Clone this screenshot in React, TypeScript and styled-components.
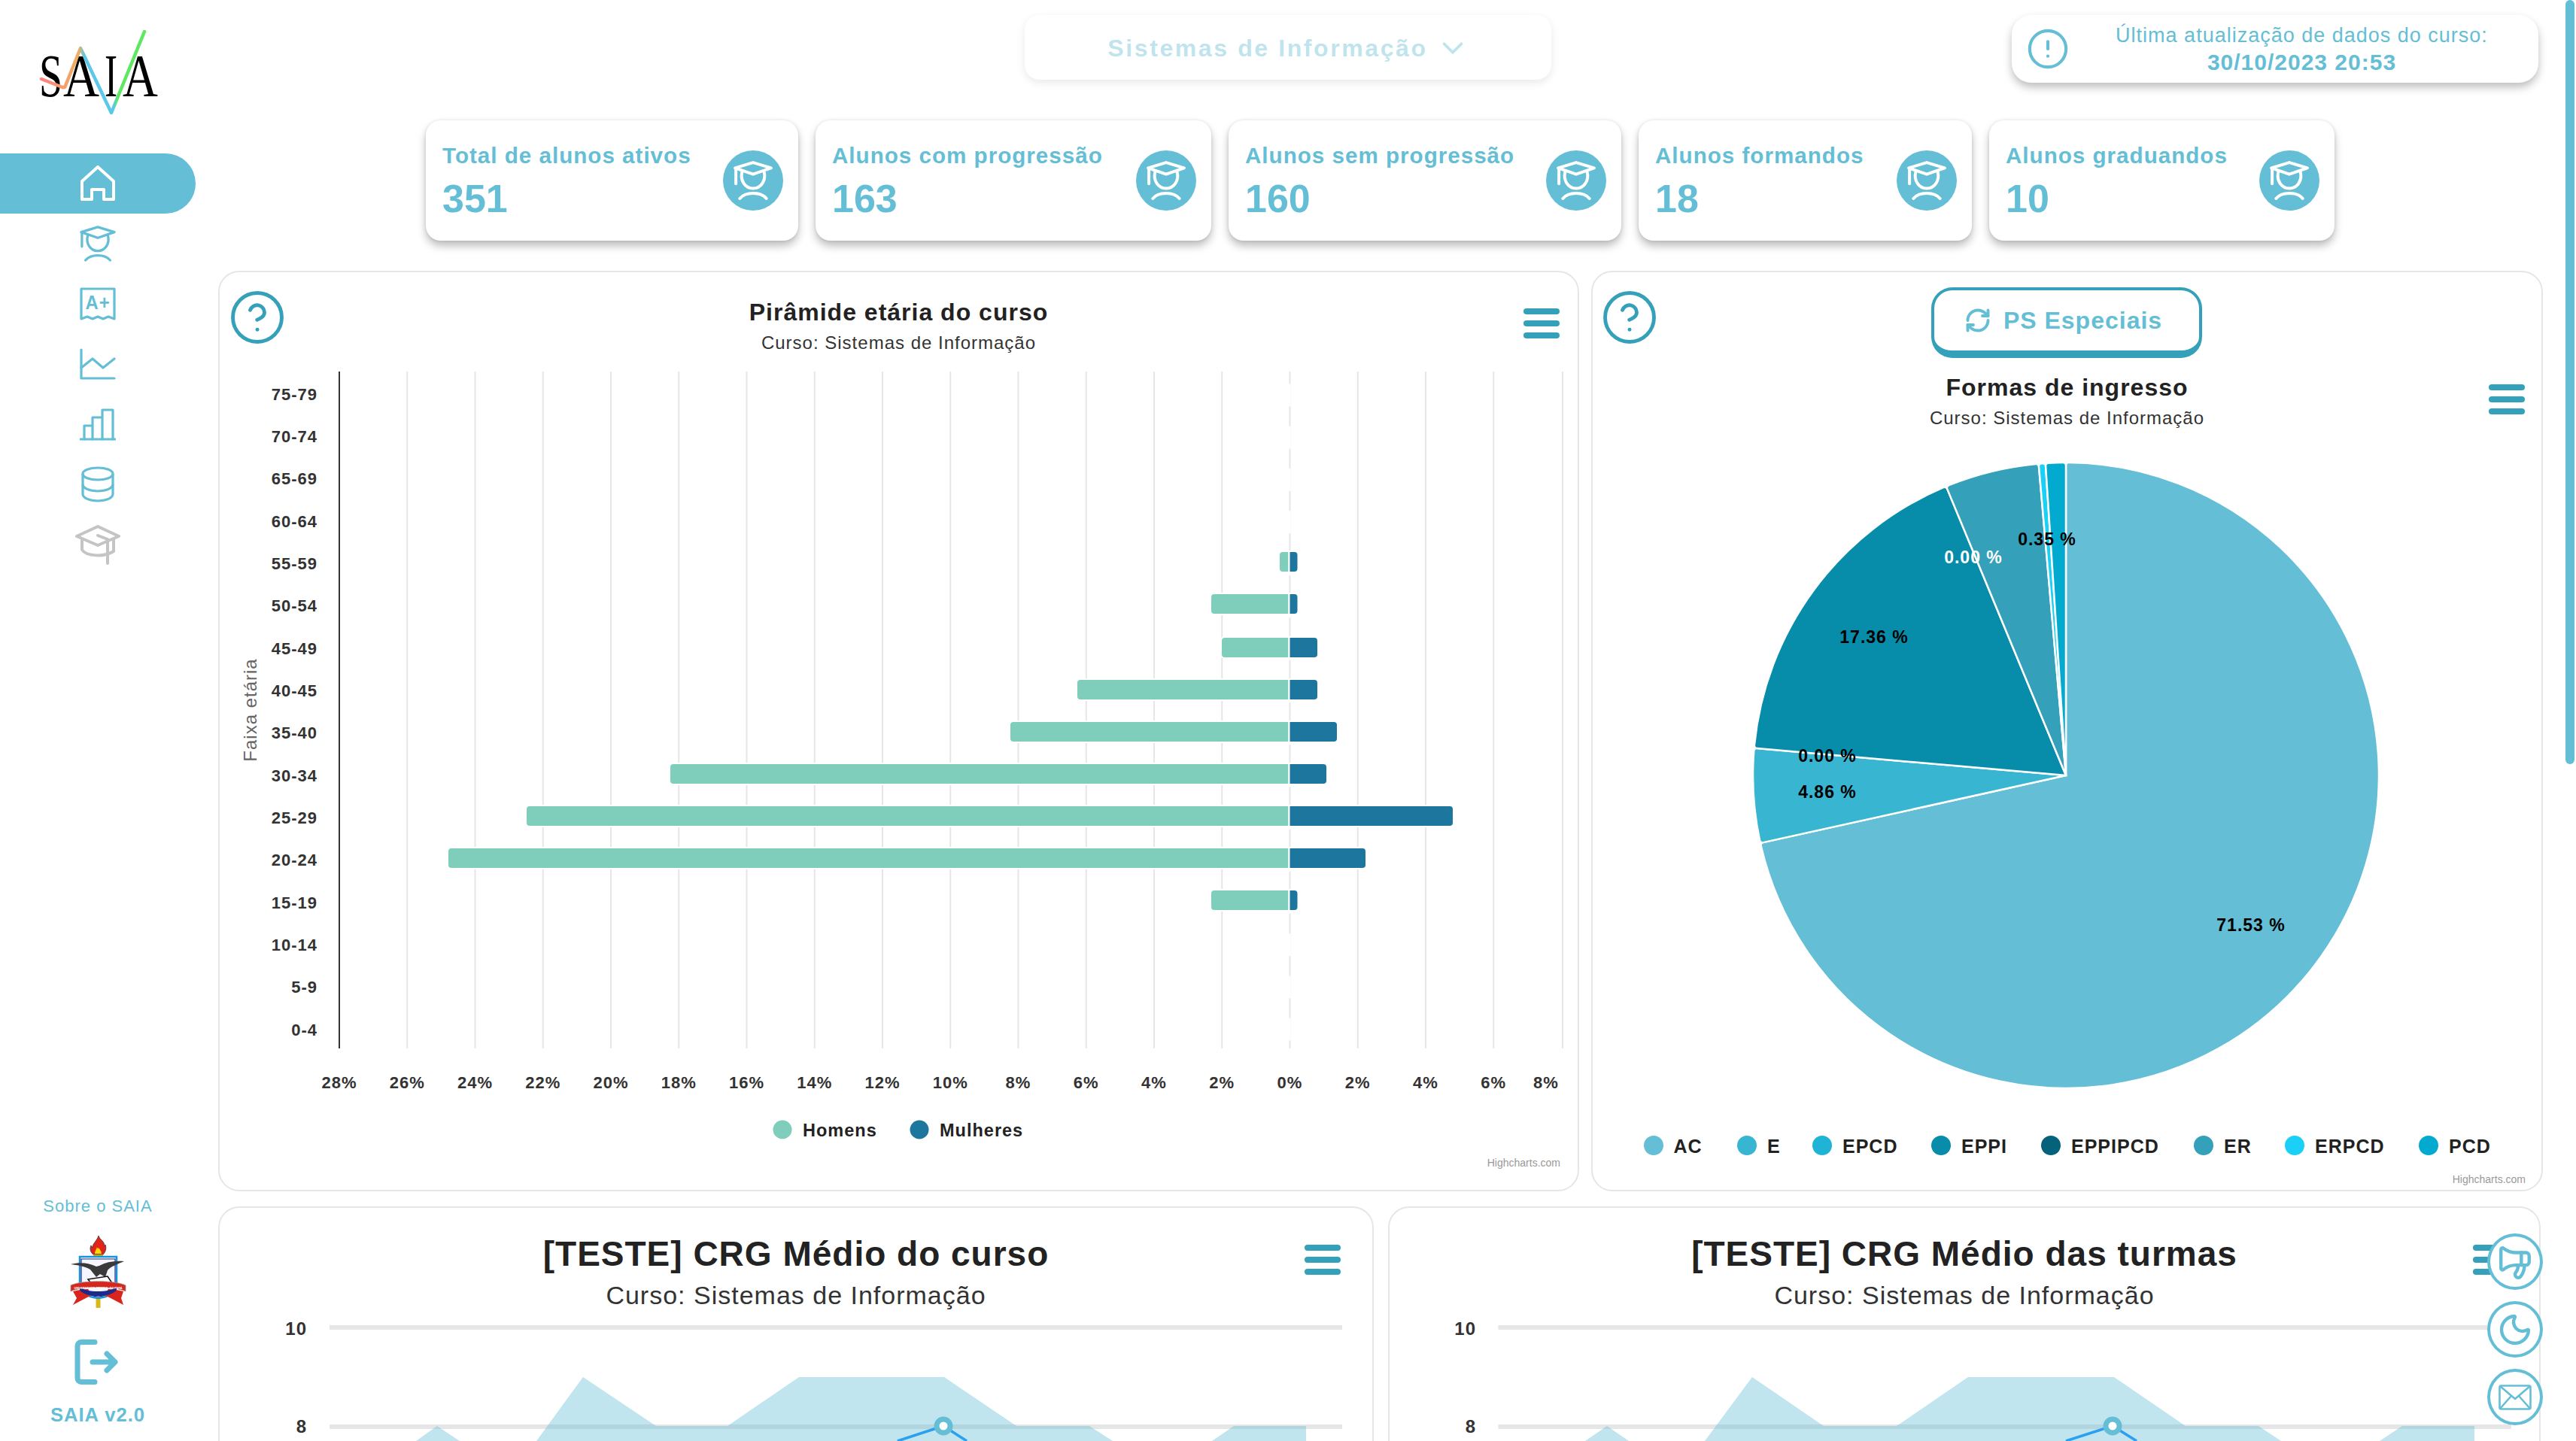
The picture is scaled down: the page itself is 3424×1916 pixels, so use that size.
import React from 'react'
import styled, { createGlobalStyle } from 'styled-components'
import { CircleAlert, CircleHelp, ChevronDown, RefreshCw, Megaphone, Moon } from 'lucide-react'

const ACCENT = '#64bed5'
const DEEP = '#34a0b9'
const GRID = '#e6e6e6'
const INK = '#333333'

const GlobalStyle = createGlobalStyle`
	html, body {
		margin: 0;
		height: 100%;
		overflow: hidden;
		background: #fff;
		font-family: 'Liberation Sans', Arial, sans-serif;
		letter-spacing: 1px;
	}
	* { box-sizing: border-box; }
`

const Shell = styled.div`
	display: flex;
	height: 100vh;
	background: #fff;
`

/* ---------- sidebar ---------- */

const Sidebar = styled.aside`
	flex: 0 0 290px;
	display: flex;
	flex-direction: column;
	height: 100vh;
	padding-bottom: 20px;
`

const LogoBox = styled.div`
	height: 204px;
	padding: 40px 0 0 52px;
	svg { display: block; }
`

const Nav = styled.nav`
	display: flex;
	flex-direction: column;
`

const NavItem = styled.a<{ $active?: boolean; $muted?: boolean }>`
	display: flex;
	align-items: center;
	justify-content: center;
	width: 260px;
	height: 80px;
	border-radius: 0 40px 40px 0;
	background: ${p => (p.$active ? ACCENT : 'transparent')};
	color: ${p => (p.$active ? '#fff' : p.$muted ? '#c4c4c4' : ACCENT)};
`

const SideBottom = styled.div`
	margin-top: auto;
	width: 260px;
	display: flex;
	flex-direction: column;
	align-items: center;
`

const AboutLink = styled.a`
	font-size: 22px;
	color: ${ACCENT};
`

const Crest = styled.svg`
	display: block;
	margin-top: 26px;
`

const LogoutIcon = styled.svg`
	display: block;
	margin: 42px 4px 0 0;
	color: ${ACCENT};
`

const Version = styled.div`
	margin-top: 26px;
	font-size: 25.6px;
	font-weight: 700;
	color: ${ACCENT};
`

/* ---------- content ---------- */

const Content = styled.main`
	flex: 1;
	height: 100vh;
	overflow: hidden;
`

const ScrollThumb = styled.div`
	position: fixed;
	top: 0;
	right: 2px;
	width: 12px;
	height: 1016px;
	border-radius: 6px;
	background: ${ACCENT};
`

const TopBar = styled.header`
	display: grid;
	grid-template-columns: 700px 700px;
	justify-content: space-between;
	padding: 20px 50px 0 1072px;
	align-items: start;
`

const CourseSelect = styled.div`
	height: 86px;
	display: flex;
	align-items: center;
	justify-content: center;
	gap: 10px;
	padding: 2px 0 0 2px;
	border-radius: 20px;
	box-shadow: 0 4px 12px rgba(0, 0, 0, 0.09);
	color: rgba(100, 190, 213, 0.42);
	font-size: 32px;
	font-weight: 700;
	letter-spacing: 2.6px;
`

const UpdateBox = styled.div`
	height: 90px;
	display: flex;
	align-items: center;
	padding-left: 19px;
	border-radius: 26px;
	color: ${ACCENT};
	box-shadow: 0 6px 12px rgba(0, 0, 0, 0.26);
`

const UpdateText = styled.div`
	flex: 1;
	text-align: center;
	padding-right: 6px;
	font-size: 27px;
	line-height: 36px;
	strong { display: block; font-size: 30px; }
`

const StatRow = styled.section`
	display: grid;
	grid-template-columns: 495px 526px 522px 443px 459px;
	gap: 23px;
	margin: 50px 0 0 276px;
`

const StatCard = styled.article`
	height: 160px;
	display: flex;
	align-items: center;
	justify-content: space-between;
	padding: 0 20px 0 22px;
	border-radius: 20px;
	color: ${ACCENT};
	box-shadow: 0 7px 12px rgba(0, 0, 0, 0.26), 0 0 4px rgba(0, 0, 0, 0.1);
`

const StatText = styled.div`
	padding-bottom: 2px;
`

const StatLabel = styled.div`
	font-size: 29.6px;
	font-weight: 700;
	line-height: 36px;
	white-space: nowrap;
`

const StatValue = styled.div`
	margin-top: 14px;
	font-size: 52px;
	font-weight: 700;
	line-height: 50px;
	letter-spacing: 0;
`

const StatIcon = styled.div`
	flex: 0 0 80px;
	height: 80px;
	display: flex;
	align-items: center;
	justify-content: center;
	border-radius: 50%;
	background: ${ACCENT};
	color: #fff;
`

const ChartGrid = styled.section<{ $cols: string; $gap: number; $height: number; $top: number }>`
	display: grid;
	grid-template-columns: ${p => p.$cols};
	column-gap: ${p => p.$gap}px;
	margin-top: ${p => p.$top}px;
	> * { height: ${p => p.$height}px; }
`

const Panel = styled.article`
	position: relative;
	display: flex;
	flex-direction: column;
	align-items: center;
	border: 2px solid ${GRID};
	border-radius: 28px;
	background: #fff;
	svg.chart { display: block; flex: none; }
`

const ChartTitle = styled.h2<{ $large?: boolean }>`
	margin: 34px 0 0;
	font-size: ${p => (p.$large ? '46px' : '32px')};
	line-height: ${p => (p.$large ? '54px' : '38px')};
	font-weight: 700;
	color: #222;
`

const ChartSubtitle = styled.div<{ $large?: boolean }>`
	margin-top: ${p => (p.$large ? '8px' : '7px')};
	font-size: ${p => (p.$large ? '34px' : '24px')};
	line-height: ${p => (p.$large ? '40px' : '30px')};
	color: #333;
`

const HelpButton = styled.div<{ $left: number }>`
	position: absolute;
	top: 21px;
	left: ${p => p.$left}px;
	color: ${DEEP};
	line-height: 0;
`

const MenuButton = styled.div<{ $top: number; $right: number }>`
	position: absolute;
	top: ${p => p.$top}px;
	right: ${p => p.$right}px;
	width: 48px;
	display: flex;
	flex-direction: column;
	gap: 8px;
	span {
		height: 8px;
		border-radius: 4px;
		background: ${DEEP};
	}
`

const SpecialButton = styled.button`
	margin: 20px 2px 0 0;
	width: 360px;
	height: 94px;
	display: flex;
	align-items: center;
	justify-content: center;
	gap: 16px;
	padding: 0 8px 0 0;
	background: #fff;
	border: 4px solid ${DEEP};
	border-bottom-width: 10px;
	border-radius: 28px;
	color: ${ACCENT};
	font-family: inherit;
	font-size: 32px;
	font-weight: 700;
	letter-spacing: 1px;
`

const SpecialTitle = styled(ChartTitle)`
	margin-top: 20px;
`

const FloatStack = styled.div`
	position: fixed;
	right: 44px;
	bottom: 21px;
	display: flex;
	flex-direction: column;
	gap: 15px;
`

const FloatButton = styled.button`
	width: 74px;
	height: 75px;
	padding: 0;
	display: flex;
	align-items: center;
	justify-content: center;
	border: 4px solid ${ACCENT};
	border-radius: 50%;
	background: #fff;
	color: ${ACCENT};
`

/* ---------- svg chart text ---------- */

const AxisText = styled.text`
	font-size: 22px;
	font-weight: 700;
	fill: ${INK};
`

const AxisTitle = styled.text`
	font-size: 24px;
	fill: #666;
`

const LegendText = styled.text<{ $size: number }>`
	font-size: ${p => p.$size}px;
	font-weight: 700;
	fill: #222;
`

const Credits = styled.text`
	font-size: 14px;
	fill: #999;
	letter-spacing: 0;
`

const PieLabel = styled.text`
	font-size: 23px;
	font-weight: 700;
	letter-spacing: 1px;
`

/* ---------- icons ---------- */

const Student = ({ size = 48, stroke = 3.4 }: { size?: number; stroke?: number }) => (
	<svg width={size} height={size} viewBox='0 0 48 50' fill='none' stroke='currentColor' strokeWidth={stroke} strokeLinecap='round' strokeLinejoin='round'>
		<path d='M24 2 47 9 24 17 1 9Z' />
		<path d='M2 10v19' />
		<path d='M10 14c-3 11 4 21 14 21s17-10 14-21' />
		<path d='M7 48c7-9 27-9 34 0' />
	</svg>
)

const navIcons = [
	<svg key='home' width='48' height='49' viewBox='0 0 48 49' fill='none' stroke='currentColor' strokeWidth='4' strokeLinejoin='round'>
		<path d='M3 21 24 2l21 19v24H32V32H16v13H3Z' />
	</svg>,
	<Student key='student' />,
	<svg key='grade' width='48' height='44' viewBox='0 0 48 44' fill='none' stroke='currentColor' strokeWidth='3.2' strokeLinejoin='round'>
		<path d='M2 2h44v40l-8-3-7 3-7-3-7 3-7-3-8 3Z' />
		<text x='24' y='29' textAnchor='middle' fontSize='25' fontWeight='700' fill='currentColor' stroke='none' textLength='33' lengthAdjust='spacingAndGlyphs'>A+</text>
	</svg>,
	<svg key='line' width='48' height='42' viewBox='0 0 48 42' fill='none' stroke='currentColor' strokeWidth='3.2' strokeLinecap='round' strokeLinejoin='round'>
		<path d='M2 2v38h44' />
		<path d='M2 26 17 14l14 12 15-12' />
	</svg>,
	<svg key='bars' width='48' height='43' viewBox='0 0 48 43' fill='none' stroke='currentColor' strokeWidth='3.2' strokeLinecap='round' strokeLinejoin='round'>
		<path d='M1 41h46' />
		<path d='M6 41V23h11v18M17 41V12h13v29M30 41V2h14v39' />
	</svg>,
	<svg key='db' width='44' height='49' viewBox='0 0 44 49' fill='none' stroke='currentColor' strokeWidth='3.2'>
		<ellipse cx='22' cy='10' rx='20' ry='8' />
		<path d='M2 10v27c0 5 9 9 20 9s20-4 20-9V10' />
		<path d='M2 24c0 5 9 9 20 9s20-4 20-9' />
	</svg>,
	<svg key='cap' width='60' height='53' viewBox='0 0 60 53' fill='none' stroke='currentColor' strokeWidth='4' strokeLinecap='round' strokeLinejoin='round'>
		<path d='M30 2 58 15 30 27 2 15Z' />
		<path d='M9 20v13c6 9 30 10 42 2V20' />
		<path d='M30 14l13 5v32' />
	</svg>,
]

/* ---------- pyramid data ---------- */

const AGES = ['75-79', '70-74', '65-69', '60-64', '55-59', '50-54', '45-49', '40-45', '35-40', '30-34', '25-29', '20-24', '15-19', '10-14', '5-9', '0-4']
const ZERO_X = 1713.5
const TICKS = [28, 26, 24, 22, 20, 18, 16, 14, 12, 10, 8, 6, 4, 2, 0, 2, 4, 6, 8]
const tickX = (i: number) => (i === 18 ? 2077 : 451 + i * 90.25)
const labelX = (i: number) => (i === 18 ? 2055 : tickX(i))

// y of the bar, left end, right end
const BARS: [number, number, number][] = [
	[734, 1701, 1724.5],
	[790, 1610, 1724.5],
	[848, 1624, 1751],
	[904, 1432, 1751],
	[960, 1343, 1777],
	[1016, 891, 1763],
	[1072, 700, 1931],
	[1128, 596, 1815],
	[1184, 1610, 1724.5],
]

const leftBar = (x: number, y: number) =>
	`M${ZERO_X - 1} ${y}H${x + 4}Q${x} ${y} ${x} ${y + 4}V${y + 22}Q${x} ${y + 26} ${x + 4} ${y + 26}H${ZERO_X - 1}Z`
const rightBar = (x: number, y: number) =>
	`M${ZERO_X + 1} ${y}H${x - 4}Q${x} ${y} ${x} ${y + 4}V${y + 22}Q${x} ${y + 26} ${x - 4} ${y + 26}H${ZERO_X + 1}Z`

const Pyramid = () => (
	<svg className='chart' width='1805' height='1100' viewBox='292 480 1805 1100' style={{ marginTop: 9 }}>
		{TICKS.map((_, i) =>
			i === 0 ? null : <rect key={i} x={tickX(i) - 1} y='494' width='2' height='900' fill={GRID} />
		)}
		<rect x='450' y='494' width='2' height='900' fill={INK} />
		{AGES.map((_, i) => (
			<rect key={i} x={ZERO_X - 2} y={510.5 + i * 56.2} width='4' height='30' fill='#fff' />
		))}
		{BARS.map(([y, l, r]) => (
			<g key={y} stroke='#fff' strokeWidth='4' style={{ paintOrder: 'stroke' }}>
				<path d={leftBar(l, y)} fill='#7fcdbb' />
				<path d={rightBar(r, y)} fill='#1c769e' />
			</g>
		))}
		{AGES.map((age, i) => (
			<AxisText key={age} x='422' y={524 + i * 56.35} textAnchor='end' dominantBaseline='central'>{age}</AxisText>
		))}
		{TICKS.map((t, i) => (
			<AxisText key={i} x={labelX(i)} y='1439' textAnchor='middle' dominantBaseline='central'>{t}%</AxisText>
		))}
		<AxisTitle transform='translate(332 944) rotate(-90)' textAnchor='middle' dominantBaseline='central'>Faixa etária</AxisTitle>
		<circle cx='1040' cy='1502' r='12.5' fill='#7fcdbb' />
		<LegendText $size={23.5} x='1067' y='1503' dominantBaseline='central'>Homens</LegendText>
		<circle cx='1222' cy='1502' r='12.5' fill='#1c769e' />
		<LegendText $size={23.5} x='1249' y='1503' dominantBaseline='central'>Mulheres</LegendText>
		<Credits x='2074' y='1546' textAnchor='end' dominantBaseline='central'>Highcharts.com</Credits>
	</svg>
)

/* ---------- pie data ---------- */

const CX = 2746
const CY = 1029
const R = 416

const SLICES = [
	{ name: 'AC', value: 71.53, color: '#64bed5', legend: 2198, text: 2224.5 },
	{ name: 'E', value: 4.86, color: '#38b6d1', legend: 2322, text: 2349 },
	{ name: 'EPCD', value: 0, color: '#1fb3d6', legend: 2422, text: 2449 },
	{ name: 'EPPI', value: 17.36, color: '#078daa', legend: 2580, text: 2607 },
	{ name: 'EPPIPCD', value: 0, color: '#05627b', legend: 2726, text: 2753 },
	{ name: 'ER', value: 4.86, color: '#34a0b9', legend: 2929, text: 2956 },
	{ name: 'ERPCD', value: 0.35, color: '#1bd0f7', legend: 3050, text: 3077 },
	{ name: 'PCD', value: 1.04, color: '#03aad0', legend: 3228, text: 3255 },
]

const PIE_LABELS = [
	{ text: '71.53 %', x: 2992, y: 1228, fill: '#000' },
	{ text: '4.86 %', x: 2429, y: 1051, fill: '#000' },
	{ text: '0.00 %', x: 2429, y: 1003, fill: '#000' },
	{ text: '17.36 %', x: 2491, y: 845, fill: '#000' },
	{ text: '0.00 %', x: 2623, y: 739, fill: '#fff' },
	{ text: '0.35 %', x: 2721, y: 715, fill: '#000' },
]

const polar = (deg: number, r: number) => {
	const a = (deg * Math.PI) / 180
	return `${(CX + r * Math.sin(a)).toFixed(2)} ${(CY - r * Math.cos(a)).toFixed(2)}`
}

const slicePath = (from: number, to: number) => {
	const c = Math.min(4, ((to - from) * Math.PI * R) / 360)
	const nudge = (c / R) * (180 / Math.PI)
	const large = to - from > 180 ? 1 : 0
	return [
		`M${CX} ${CY}`,
		`L${polar(from, R - c)}`,
		`Q${polar(from, R)} ${polar(from + nudge, R)}`,
		`A${R} ${R} 0 ${large} 1 ${polar(to - nudge, R)}`,
		`Q${polar(to, R)} ${polar(to, R - c)}`,
		'Z',
	].join(' ')
}

const Pie = () => {
	let angle = 0
	return (
		<svg className='chart' width='1261' height='1000' viewBox='2117 580 1261 1000' style={{ marginTop: 11 }}>
			{SLICES.map(s => {
				const from = angle
				angle += (s.value / 100) * 360
				if (!s.value) return null
				return <path key={s.name} d={slicePath(from, angle)} fill={s.color} stroke='#fff' strokeWidth='2.5' />
			})}
			{PIE_LABELS.map(l => (
				<PieLabel key={`${l.text}${l.y}`} x={l.x} y={l.y} textAnchor='middle' dominantBaseline='central' fill={l.fill}>{l.text}</PieLabel>
			))}
			{SLICES.map(s => (
				<g key={s.name}>
					<circle cx={s.legend} cy='1521' r='13' fill={s.color} />
					<LegendText $size={25} x={s.text} y='1522' dominantBaseline='central'>{s.name}</LegendText>
				</g>
			))}
			<Credits x='3357' y='1566' textAnchor='end' dominantBaseline='central'>Highcharts.com</Credits>
		</svg>
	)
}

/* ---------- CRG area charts ---------- */

type CrgProps = {
	left: number
	width: number
	gridFrom: number
	gridTo: number
	labelRight: number
	areas: string[]
	dot: number
	lineFrom: number
	lineTo: number
}

const CrgChart = ({ left, width, gridFrom, gridTo, labelRight, areas, dot, lineFrom, lineTo }: CrgProps) => (
	<svg className='chart' width={width} height='166' viewBox={`${left} 1750 ${width} 166`} style={{ marginTop: 8 }}>
		<rect x={gridFrom} y='1762' width={gridTo - gridFrom} height='6' fill={GRID} />
		<rect x={gridFrom} y='1894' width={gridTo - gridFrom} height='6' fill={GRID} />
		<AxisText x={labelRight} y='1766' textAnchor='end' dominantBaseline='central' style={{ fontSize: 24 }}>10</AxisText>
		<AxisText x={labelRight} y='1896' textAnchor='end' dominantBaseline='central' style={{ fontSize: 24 }}>8</AxisText>
		{areas.map(points => (
			<polygon key={points} points={points} fill={ACCENT} fillOpacity='0.4' />
		))}
		<path d={`M${lineFrom} 1916L${dot} 1896L${lineTo} 1916`} fill='none' stroke='#2b9ff0' strokeWidth='3.5' />
		<circle cx={dot} cy='1896' r='9' fill='#fff' stroke={ACCENT} strokeWidth='7' />
	</svg>
)

const CARDS = [
	{ label: 'Total de alunos ativos', value: '351' },
	{ label: 'Alunos com progressão', value: '163' },
	{ label: 'Alunos sem progressão', value: '160' },
	{ label: 'Alunos formandos', value: '18' },
	{ label: 'Alunos graduandos', value: '10' },
]

const Menu = (p: { top: number; right: number }) => (
	<MenuButton $top={p.top} $right={p.right}>
		<span />
		<span />
		<span />
	</MenuButton>
)

const App = () => {
	return (
		<>
			<GlobalStyle />
			<Shell>
				<Sidebar>
					<LogoBox>
						<svg width='164' height='116' viewBox='0 0 164 116'>
							<defs>
								<linearGradient id='saiaLine' x1='0' y1='0' x2='1' y2='0'>
									<stop offset='0' stopColor='#ff8080' />
									<stop offset='0.36' stopColor='#f0b060' />
									<stop offset='0.42' stopColor='#5cc8e8' />
									<stop offset='0.7' stopColor='#5cc8e8' />
									<stop offset='0.74' stopColor='#5ee860' />
									<stop offset='1' stopColor='#5ee860' />
								</linearGradient>
							</defs>
							<g fontFamily="'Liberation Serif', serif" fontSize='80' fill='#000' style={{ letterSpacing: 0 }}>
								<text transform='translate(0 88) scale(0.7 1)'>S</text>
								<text transform='translate(32 88) scale(0.83 1)'>A</text>
								<text transform='translate(87 88) scale(0.64 1)'>I</text>
								<text transform='translate(111 88) scale(0.81 1)'>A</text>
							</g>
							<path d='M3 65 31 76q3 1 4-2L55 24 96 110 140 2' fill='none' stroke='url(#saiaLine)' strokeWidth='4.5' strokeLinecap='round' strokeLinejoin='round' />
						</svg>
					</LogoBox>
					<Nav>
						{navIcons.map((icon, i) => (
							<NavItem key={i} $active={i === 0} $muted={i === 6}>{icon}</NavItem>
						))}
					</Nav>
					<SideBottom>
						<AboutLink>Sobre o SAIA</AboutLink>
						<Crest width='75' height='96' viewBox='0 0 75 96'>
							<path d='M38 0c1 5 8 7 8 14 1-1 1-2 1-2 2 5 0 10-3 13H31c-4-3-5-8-3-12 1 1 1 2 2 3 0-6 6-9 8-16Z' fill='#e2231a' stroke='#333' strokeWidth='.8' />
							<path d='M33 24c0-4 2-5 3-9 1 3 1 3 2 1 2 3 4 5 4 8Z' fill='#ffd800' />
							<rect x='31' y='25' width='13' height='5' fill='#c9ad10' />
							<path d='M13 28h49v34c0 13-10 20-24.5 21C23 82 13 75 13 62Z' fill='#fff' stroke='#1b93dc' strokeWidth='2.5' />
							<path d='M15 31h45v31c0 11-9 18-22.5 19C24 80 15 73 15 62Z' fill='#f6f6ff' stroke='#1c2a8c' strokeWidth='1.2' />
							<path d='M1 38c12-3 24-2 34 3l4-1c9-5 20-7 33-6-9 4-18 7-22 12l-3 9-7-4-5 4-8-10c-7-4-17-6-26-7Z' fill='#3a3a3a' />
							<path d='M24 58 50 54l6 9-24 5Z' fill='#fff' stroke='#111' strokeWidth='1.6' />
							<path d='M1 66c14-7 59-7 73 0v8C60 67 15 67 1 74Z' fill='#d9251c' stroke='#999' strokeWidth='.8' />
							<path d='M4 74c8-2 14-3 20-3l5 8-8 4-17 9 5-9ZM71 74c-8-2-14-3-20-3l-5 8 8 4 17 9-3-9Z' fill='#d9251c' />
							<path d='M13 72c6 11 42 11 49 0v-4C54 76 20 76 13 68Z' fill='#1c2a8c' />
							<text x='37.5' y='70.5' textAnchor='middle' fontSize='3.7' fontWeight='700' fill='#fff' style={{ letterSpacing: 0 }}>UNIVERSIDADE FEDERAL DO PARÁ</text>
							<rect x='34.5' y='84' width='6' height='12' fill='#d7b91a' />
						</Crest>
						<LogoutIcon width='58' height='60' viewBox='0 0 58 60' fill='none' stroke='currentColor' strokeWidth='7' strokeLinecap='round' strokeLinejoin='round'>
							<path d='M27 3.5H9a5 5 0 0 0-5 5v43a5 5 0 0 0 5 5h18' />
							<path d='M24 30h29M43 19l11 11-11 11' />
						</LogoutIcon>
						<Version>SAIA v2.0</Version>
					</SideBottom>
				</Sidebar>

				<Content>
					<TopBar>
						<CourseSelect>
							Sistemas de Informação
							<ChevronDown size={46} strokeWidth={2} />
						</CourseSelect>
						<UpdateBox>
							<CircleAlert size={58} strokeWidth={1.7} />
							<UpdateText>
								Última atualização de dados do curso:
								<strong>30/10/2023 20:53</strong>
							</UpdateText>
						</UpdateBox>
					</TopBar>

					<StatRow>
						{CARDS.map(card => (
							<StatCard key={card.label}>
								<StatText>
									<StatLabel>{card.label}</StatLabel>
									<StatValue>{card.value}</StatValue>
								</StatText>
								<StatIcon>
									<Student size={52} stroke={3.8} />
								</StatIcon>
							</StatCard>
						))}
					</StatRow>

					<ChartGrid $cols='1809px 1265px' $gap={16} $height={1224} $top={40}>
						<Panel>
							<HelpButton $left={11}><CircleHelp size={78} strokeWidth={1.5} /></HelpButton>
							<Menu top={48} right={24} />
							<ChartTitle>Pirâmide etária do curso</ChartTitle>
							<ChartSubtitle>Curso: Sistemas de Informação</ChartSubtitle>
							<Pyramid />
						</Panel>
						<Panel>
							<HelpButton $left={10}><CircleHelp size={78} strokeWidth={1.5} /></HelpButton>
							<Menu top={149} right={22} />
							<SpecialButton>
								<RefreshCw size={36} strokeWidth={2.6} />
								PS Especiais
							</SpecialButton>
							<SpecialTitle>Formas de ingresso</SpecialTitle>
							<ChartSubtitle>Curso: Sistemas de Informação</ChartSubtitle>
							<Pie />
						</Panel>
					</ChartGrid>

					<ChartGrid $cols='1536px 1532px' $gap={19} $height={1218} $top={20}>
						<Panel>
							<Menu top={49} right={42} />
							<ChartTitle $large>[TESTE] CRG Médio do curso</ChartTitle>
							<ChartSubtitle $large>Curso: Sistemas de Informação</ChartSubtitle>
							<CrgChart
								left={292}
								width={1532}
								gridFrom={438}
								gridTo={1784}
								labelRight={408}
								areas={[
									'553,1916 581,1896 611,1916',
									'713,1916 775,1831 872,1896 967,1896 1062,1831 1255,1831 1351,1896 1448,1896 1479,1916',
									'1611,1916 1640,1896 1736,1896 1736,1916',
								]}
								dot={1254}
								lineFrom={1193}
								lineTo={1285}
							/>
						</Panel>
						<Panel>
							<Menu top={49} right={40} />
							<ChartTitle $large>[TESTE] CRG Médio das turmas</ChartTitle>
							<ChartSubtitle $large>Curso: Sistemas de Informação</ChartSubtitle>
							<CrgChart
								left={1847}
								width={1528}
								gridFrom={1991.5}
								gridTo={3338}
								labelRight={1962}
								areas={[
									'2107,1916 2136,1896 2165,1916',
									'2266,1916 2329,1831 2424,1896 2521,1896 2616,1831 2810,1831 2905,1896 3002,1896 3032,1916',
									'3163,1916 3193,1896 3289,1896 3289,1916',
								]}
								dot={2808}
								lineFrom={2746}
								lineTo={2840}
							/>
						</Panel>
					</ChartGrid>
				</Content>

				<ScrollThumb />

				<FloatStack>
					<FloatButton>
						<Megaphone size={50} strokeWidth={2.1} style={{ transform: 'scaleX(-1)' }} />
					</FloatButton>
					<FloatButton>
						<Moon size={48} strokeWidth={2.2} />
					</FloatButton>
					<FloatButton>
						<svg width='44' height='34' viewBox='0 0 44 34' fill='none' stroke='currentColor' strokeWidth='2.6' strokeLinejoin='round'>
							<rect x='1.5' y='1.5' width='41' height='31' rx='2' />
							<path d='M2 2l20 17L42 2M2 32l15-17M42 32 27 15' />
						</svg>
					</FloatButton>
				</FloatStack>
			</Shell>
		</>
	)
}

export default App
